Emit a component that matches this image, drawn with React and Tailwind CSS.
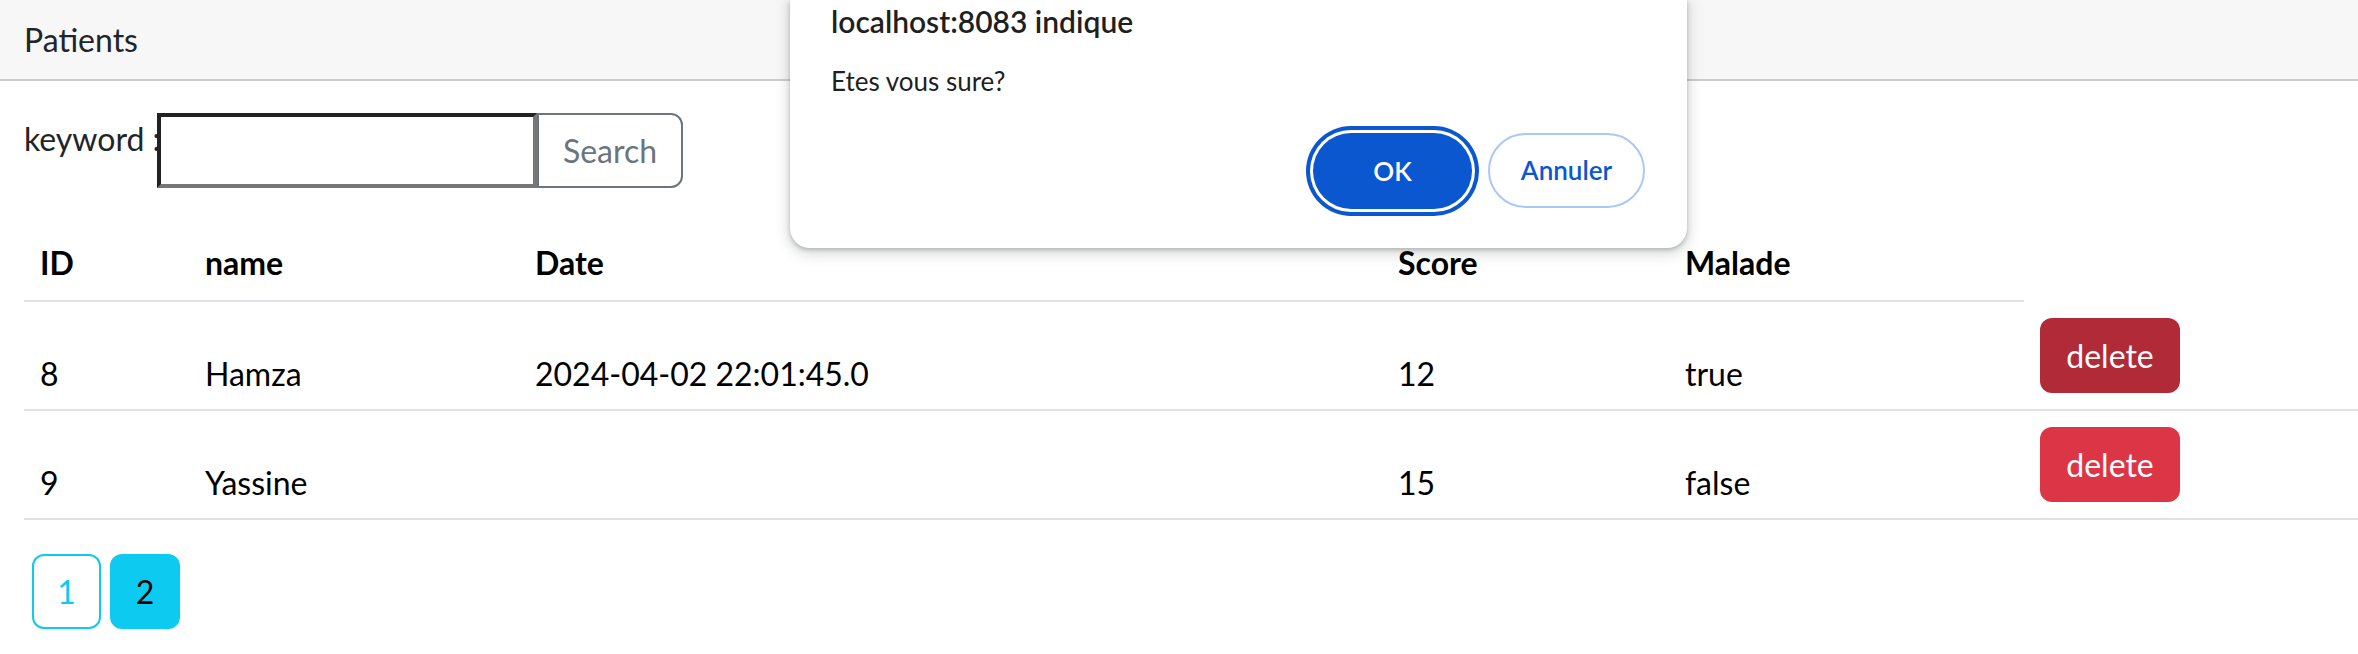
import React from "react";

const rows = [
  { id: "8", name: "Hamza", date: "2024-04-02 22:01:45.0", score: "12", malade: "true", active: true },
  { id: "9", name: "Yassine", date: "", score: "15", malade: "false", active: false },
];

export default function App() {
  const head = "px-4 pt-[19px] pb-[13px] border-b-2 border-[#dee2e6] leading-[48px] font-bold";
  const cell = "px-4 pt-[48px] border-b-2 border-[#dee2e6] leading-[48px]";
  return (
    <div className="relative w-[2358px] h-[654px] overflow-hidden bg-white font-['Lato','Noto_Sans',sans-serif] text-[32px] text-[#212529]">
      {/* card header */}
      <div className="h-[81px] bg-[#f7f7f7] border-b-2 border-[#cccccc] px-6 pt-4 leading-[48px]">
        Patients
      </div>

      {/* card body */}
      <div className="pl-6 pt-8">
        <div className="flex items-start h-[75px]">
          <span className="w-[133px] pt-[2px] leading-[48px] whitespace-nowrap">keyword :</span>
          <input
            type="text"
            className="w-[380px] h-[75px] border-4 border-t-[#222222] border-l-[#222222] border-b-[#777777] border-r-[#777777] bg-white outline-none"
          />
          <button className="w-[146px] h-[75px] border-2 border-[#6c757d] rounded-r-[12px] text-[#6c757d] leading-[48px]">
            Search
          </button>
        </div>

        <div className="mt-8 grid grid-cols-[165px_330px_863px_287px_355px_1fr] text-black">
          <div className={head}>ID</div>
          <div className={head}>name</div>
          <div className={head}>Date</div>
          <div className={head}>Score</div>
          <div className={head}>Malade</div>
          <div></div>

          {rows.map((r) => (
            <React.Fragment key={r.id}>
              <div className={cell}>{r.id}</div>
              <div className={cell}>{r.name}</div>
              <div className={cell}>{r.date}</div>
              <div className={cell}>{r.score}</div>
              <div className={cell}>{r.malade}</div>
              <div className="px-4 py-4 border-b-2 border-[#dee2e6]">
                <button
                  className={
                    "w-[140px] h-[75px] rounded-[12px] text-white leading-[48px] " +
                    (r.active ? "bg-[#b02a37]" : "bg-[#dc3545]")
                  }
                >
                  delete
                </button>
              </div>
            </React.Fragment>
          ))}
        </div>

        <div className="mt-[34px] ml-2 flex gap-[9px]">
          <button className="w-[69px] h-[75px] border-2 border-[#0dcaf0] rounded-[12px] text-[#0dcaf0] flex items-center justify-center">
            1
          </button>
          <button className="w-[70px] h-[75px] border-2 border-[#0dcaf0] bg-[#0dcaf0] rounded-[12px] text-black flex items-center justify-center">
            2
          </button>
        </div>
      </div>

      {/* alert dialog */}
      <div className="absolute left-[790px] top-0 w-[897px] h-[248px] bg-white rounded-b-[20px] shadow-[0_4px_12px_4px_rgba(60,64,67,0.15),0_2px_4px_rgba(60,64,67,0.3)] px-[41px] pt-px">
        <div className="text-[30px] font-semibold leading-[40px] text-[#1f1f1f]">localhost:8083 indique</div>
        <div className="mt-6 text-[26px] leading-[32px] text-[#1f1f1f]">Etes vous sure?</div>
        <div className="mt-9 flex justify-end gap-4 pr-px">
          <button className="w-[159px] h-[76px] rounded-full bg-[#0b57d0] text-white text-[26px] font-semibold ring-4 ring-[#0b57d0] ring-offset-[3px] ring-offset-white">
            OK
          </button>
          <button className="w-[157px] h-[75px] rounded-full border-2 border-[#a8c7fa] text-[#0b57d0] text-[26px] font-semibold">
            Annuler
          </button>
        </div>
      </div>
    </div>
  );
}
